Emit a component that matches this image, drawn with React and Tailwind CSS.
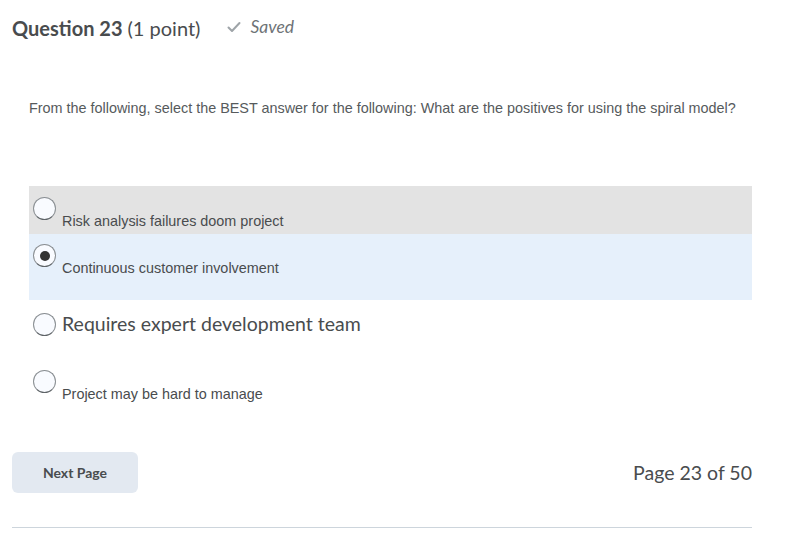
import { useState } from 'react';

const small = 'text-[14.4px] font-["Liberation_Sans",Arial,sans-serif]';

const options = [
  { id: 1, label: 'Risk analysis failures doom project', row: 'h-[48px] bg-[#e3e3e3] pt-[11px]', text: `mt-[16px] ${small}` },
  { id: 2, label: 'Continuous customer involvement', row: 'h-[66px] bg-[#e6f0fb] pt-[10px]', text: `mt-[16px] ${small}` },
  { id: 3, label: 'Requires expert development team', row: 'h-[50px] pt-[13px]', text: 'text-[19.5px] font-["Lato",sans-serif] -mt-[1px]', inline: true },
  { id: 4, label: 'Project may be hard to manage', row: 'h-[100px] pt-[20px]', text: `mt-[16px] ${small}` },
];

const Radio = ({ checked }) => (
  <div className="w-[23px] h-[23px] shrink-0 rounded-full border border-[#8a8f93] border-b-[#5f6468] bg-[#f9fbff] flex items-center justify-center">
    {checked && <div className="w-[10px] h-[10px] rounded-full bg-[#333]" />}
  </div>
);

const App = () => {
  const [selected, setSelected] = useState(2);

  return (
    <div className="w-[801px] h-[546px] bg-white text-[#494c4e] overflow-hidden">
      <div className="pl-[12px] w-[752px]">
        <div className="flex items-start h-[44px] font-['Lato',sans-serif]">
          <span className="mt-[16px] leading-[24px] text-[20px] font-bold">Question 23</span>
          <span className="mt-[16px] leading-[24px] text-[20px] ml-[5px]">(1 point)</span>
          <svg className="ml-[27px] mt-[21px]" width="14" height="12" viewBox="0 0 14 12">
            <path d="M1.5 6.5 L5 10 L12.5 2" fill="none" stroke="#9ea4a8" strokeWidth="2" strokeLinecap="round" strokeLinejoin="round" />
          </svg>
          <span className="ml-[9px] mt-[15px] leading-[24px] text-[17.5px] italic text-[#6e7376]">Saved</span>
        </div>

        <p className="ml-[17px] mt-[56px] text-[14.4px] leading-[16px] text-[#565a5c] font-['Liberation_Sans',Arial,sans-serif]">
          From the following, select the BEST answer for the following: What are the positives for using the spiral model?
        </p>

        <div className="ml-[17px] mt-[70px]">
          {options.map(o => (
            <div
              key={o.id}
              onClick={() => setSelected(o.id)}
              className={`flex items-start pl-[4px] cursor-pointer ${o.row}`}
            >
              <Radio checked={selected === o.id} />
              <div className={`ml-[6px] ${o.inline ? 'leading-[23px]' : 'leading-[16px]'} text-[#494c4e] ${o.text}`}>
                {o.label}
              </div>
            </div>
          ))}
        </div>

        <div className="flex items-center justify-between mt-[2px] font-['Lato',sans-serif]">
          <button className="w-[126px] h-[41px] rounded-[6px] bg-[#e3e9f1] text-[14px] font-bold text-[#494c4e]">
            Next Page
          </button>
          <span className="text-[19.5px] text-[#494c4e]">Page 23 of 50</span>
        </div>

        <div className="mt-[34px] border-t border-[#cdd5dc]" />
      </div>
    </div>
  );
};

export default App;
